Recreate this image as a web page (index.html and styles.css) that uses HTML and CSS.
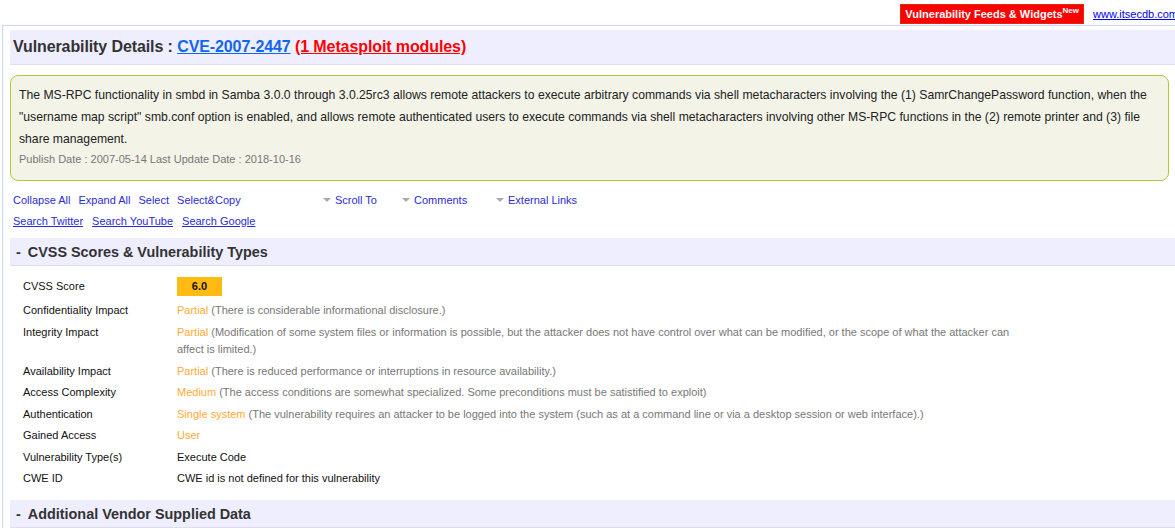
FILE: index.html
```html
<!DOCTYPE html>
<html>
<head>
<meta charset="utf-8">
<link rel="stylesheet" href="styles.css">
</head>
<body>
<div class="topbar">
  <a class="feeds" href="#">Vulnerability Feeds &amp; Widgets<sup>New</sup></a>
  <a class="site" href="#">www.itsecdb.com</a>
</div>
<div class="page">
  <h1 class="title">Vulnerability Details : <a class="cve" href="#">CVE-2007-2447</a> <a class="msf" href="#">(1 Metasploit modules)</a></h1>
  <div class="summary">
    <p class="desc">The MS-RPC functionality in smbd in Samba 3.0.0 through 3.0.25rc3 allows remote attackers to execute arbitrary commands via shell metacharacters involving the (1) SamrChangePassword function, when the "username map script" smb.conf option is enabled, and allows remote authenticated users to execute commands via shell metacharacters involving other MS-RPC functions in the (2) remote printer and (3) file share management.</p>
    <div class="dates">Publish Date : 2007-05-14 Last Update Date : 2018-10-16</div>
  </div>
  <div class="tools">
    <div class="toolrow">
      <span class="group">
        <a href="#">Collapse All</a><a href="#">Expand All</a><a href="#">Select</a><a href="#">Select&amp;Copy</a>
      </span>
      <span class="dd dd1"><i class="tri"></i><a href="#">Scroll To</a></span>
      <span class="dd dd2"><i class="tri"></i><a href="#">Comments</a></span>
      <span class="dd dd3"><i class="tri"></i><a href="#">External Links</a></span>
    </div>
    <div class="toolrow search">
      <a href="#">Search Twitter</a><a href="#">Search YouTube</a><a href="#">Search Google</a>
    </div>
  </div>
  <h2 class="section"><span class="minus">-</span>CVSS Scores &amp; Vulnerability Types</h2>
  <div class="cvss">
    <div class="lbl score-l">CVSS Score</div>
    <div class="val score-v"><span class="badge">6.0</span></div>
    <div class="lbl">Confidentiality Impact</div>
    <div class="val"><span class="lvl">Partial</span> <span class="note">(There is considerable informational disclosure.)</span></div>
    <div class="lbl">Integrity Impact</div>
    <div class="val"><span class="lvl">Partial</span> <span class="note">(Modification of some system files or information is possible, but the attacker does not have control over what can be modified, or the scope of what the attacker can affect is limited.)</span></div>
    <div class="lbl">Availability Impact</div>
    <div class="val"><span class="lvl">Partial</span> <span class="note">(There is reduced performance or interruptions in resource availability.)</span></div>
    <div class="lbl">Access Complexity</div>
    <div class="val"><span class="lvl">Medium</span> <span class="note">(The access conditions are somewhat specialized. Some preconditions must be satistified to exploit)</span></div>
    <div class="lbl">Authentication</div>
    <div class="val"><span class="lvl">Single system</span> <span class="note">(The vulnerability requires an attacker to be logged into the system (such as at a command line or via a desktop session or web interface).)</span></div>
    <div class="lbl">Gained Access</div>
    <div class="val"><span class="lvl">User</span></div>
    <div class="lbl">Vulnerability Type(s)</div>
    <div class="val">Execute Code</div>
    <div class="lbl">CWE ID</div>
    <div class="val">CWE id is not defined for this vulnerability</div>
  </div>
  <h2 class="section second"><span class="minus">-</span>Additional Vendor Supplied Data</h2>
</div>
</body>
</html>
```
FILE: styles.css
```css
html, body {
  margin: 0;
  padding: 0;
  background: #fff;
  font-family: "Liberation Sans", Arial, sans-serif;
  color: #222;
  overflow: hidden;
}
.topbar {
  height: 25px;
  display: flex;
  justify-content: flex-end;
  align-items: flex-start;
  padding-top: 4px;
  box-sizing: border-box;
  gap: 9px;
  white-space: nowrap;
  margin-right: -3px;
}
.feeds {
  background: #ff0000;
  border: 1px solid #e02a00;
  color: #fff;
  font-weight: bold;
  font-size: 11px;
  text-decoration: none;
  height: 18px;
  line-height: 19px;
  padding: 0 4px 0 4px;
}
.feeds sup {
  font-size: 8px;
  vertical-align: top;
  line-height: 10px;
  position: relative;
  top: 1px;
}
.site {
  color: #0000ee;
  font-size: 11px;
  line-height: 18px;
  padding-top: 1px;
}
.page {
  margin-left: 2px;
  border-left: 1px solid #c8d8f6;
  border-top: 1px solid #c8d8f6;
  padding-left: 7px;
  padding-top: 4px;
}
.title {
  margin: 0;
  background: #eeeeff;
  border-bottom: 1px solid #dcdcf4;
  height: 34px;
  line-height: 34px;
  font-size: 16px;
  font-weight: bold;
  color: #333;
  padding-left: 3px;
  white-space: nowrap;
  letter-spacing: -0.1px;
}
.cve { color: #1166ee; }
.msf { color: #ff0000; }
.summary {
  margin: 10px 6px 0 0;
  background: #f3f3e8;
  border: 1px solid #b2c83c;
  border-radius: 8px;
  padding: 8px 8px 13px 8px;
}
.desc {
  margin: 0;
  font-size: 12.2px;
  line-height: 22px;
  color: #222;
}
.dates {
  font-size: 11px;
  color: #777;
  line-height: 16px;
  margin-top: 1px;
}
.tools {
  margin-top: 8px;
  padding-left: 3px;
  font-size: 11px;
}
.toolrow {
  display: flex;
  align-items: center;
  height: 21px;
  white-space: nowrap;
}
.toolrow a {
  color: #2b2bd6;
  text-decoration: none;
}
.group a { margin-right: 8px; }
.group a:last-child { margin-right: 0; }
.group { width: 310px; }
.dd { display: inline-flex; align-items: center; }
.dd1 { width: 79px; }
.dd2 { width: 94px; }
.tri {
  display: inline-block;
  width: 0; height: 0;
  border-left: 4px solid transparent;
  border-right: 4px solid transparent;
  border-top: 4px solid #aaa;
  margin-right: 4px;
}
.search a { text-decoration: underline; margin-right: 9px; }
.section {
  margin: 7px 0 0 0;
  background: #eeeeff;
  border-bottom: 1px solid #dcdcf4;
  height: 27px;
  line-height: 28px;
  font-size: 14.4px;
  font-weight: bold;
  color: #333;
  padding-left: 6px;
  white-space: nowrap;
}
.minus { margin-right: 7px; }
.second { margin-top: 10px; }
.cvss {
  display: grid;
  grid-template-columns: 154px 836px;
  padding-left: 13px;
  padding-top: 10px;
  font-size: 11px;
}
.lbl, .val {
  line-height: 17.5px;
  padding: 2px 0;
}
.lbl { color: #111; }
.val { color: #111; }
.score-l, .score-v {
  height: 24px;
  padding: 0;
  box-sizing: border-box;
}
.score-l { padding-top: 1px; line-height: 19px; }
.score-v { display: flex; align-items: flex-start; }
.badge {
  display: block;
  margin-top: 1px;
  width: 45px;
  height: 19px;
  line-height: 19px;
  text-align: center;
  background: #ffbb11;
  font-weight: bold;
  color: #111;
}
.lvl { color: #ffaa33; }
.note { color: #777; }
```
